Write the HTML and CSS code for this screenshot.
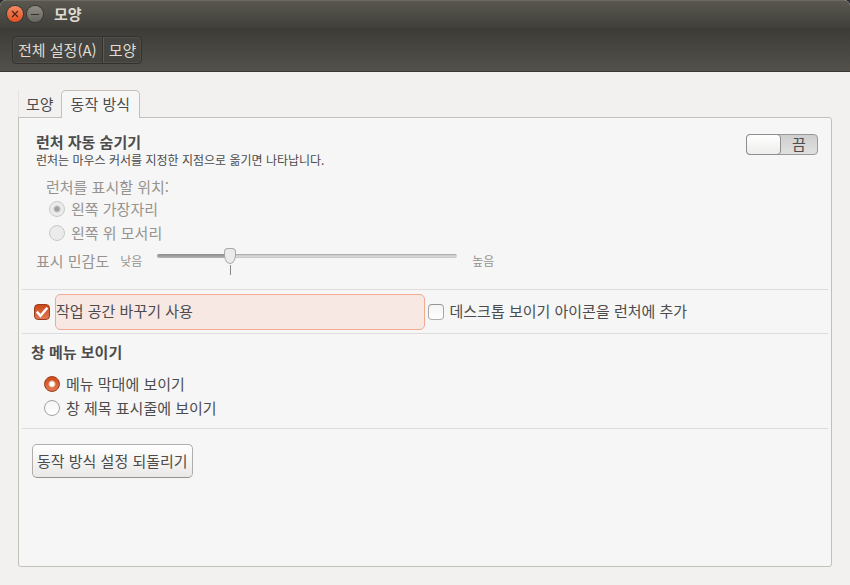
FILE: index.html
```html
<!DOCTYPE html>
<html lang="ko">
<head>
    <meta charset="UTF-8">
    <meta name="viewport" content="width=device-width, initial-scale=1.0">
    <title>모양</title>
    <link rel="stylesheet" href="styles.css">
</head>
<body>
    <div class="window">
        <!-- title bar -->
        <header class="titlebar">
            <button class="win-btn close" type="button" aria-label="닫기">
                <svg viewBox="0 0 16 16" width="16" height="16"><path d="M5 5l6 6M11 5l-6 6" stroke="#4a2416" stroke-width="1.2"/></svg>
            </button>
            <button class="win-btn minimize" type="button" aria-label="최소화">
                <svg viewBox="0 0 16 16" width="16" height="16"><path d="M4 8.5h8" stroke="#33322e" stroke-width="1"/></svg>
            </button>
            <h1>모양</h1>
        </header>

        <!-- breadcrumb toolbar -->
        <nav class="toolbar">
            <div class="crumbs">
                <button type="button">전체 설정(A)</button>
                <button type="button">모양</button>
            </div>
        </nav>

        <main class="content">
            <div class="tabs" role="tablist">
                <button class="tab" type="button" role="tab" aria-selected="false">모양</button>
                <button class="tab active" type="button" role="tab" aria-selected="true">동작 방식</button>
            </div>

            <div class="panel" role="tabpanel">
                <section class="launcher">
                    <div class="launcher-head">
                        <div>
                            <h2 id="autohide">런처 자동 숨기기</h2>
                            <p class="hint">런처는 마우스 커서를 지정한 지점으로 옮기면 나타납니다.</p>
                        </div>
                        <button class="switch" type="button" role="switch" aria-checked="false" aria-labelledby="autohide">
                            <span class="knob"></span>
                            <span class="state">끔</span>
                        </button>
                    </div>

                    <fieldset class="reveal" disabled>
                        <legend>런처를 표시할 위치:</legend>
                        <label class="option"><input type="radio" name="reveal" checked>왼쪽 가장자리</label>
                        <label class="option"><input type="radio" name="reveal">왼쪽 위 모서리</label>
                    </fieldset>

                    <div class="sensitivity">
                        <label for="sensitivity">표시 민감도</label>
                        <span class="small low">낮음</span>
                        <div class="scale">
                            <input type="range" id="sensitivity" min="0" max="100" value="23" disabled>
                            <span class="tick"></span>
                        </div>
                        <span class="small high">높음</span>
                    </div>
                </section>

                <section class="checks">
                    <div class="check-item">
                        <input type="checkbox" id="workspaces" checked>
                        <label class="focused" for="workspaces">작업 공간 바꾸기 사용</label>
                    </div>
                    <div class="check-item">
                        <input type="checkbox" id="desktop">
                        <label for="desktop">데스크톱 보이기 아이콘을 런처에 추가</label>
                    </div>
                </section>

                <section class="menus">
                    <h2>창 메뉴 보이기</h2>
                    <label class="option"><input type="radio" name="menus" checked>메뉴 막대에 보이기</label>
                    <label class="option"><input type="radio" name="menus">창 제목 표시줄에 보이기</label>
                </section>

                <div class="actions">
                    <button class="restore" type="button">동작 방식 설정 되돌리기</button>
                </div>
            </div>
        </main>
    </div>
</body>
</html>
```
FILE: styles.css
```css
* {
    box-sizing: border-box;
}
body {
    margin: 0;
    background-color: #2c2b33;
    color: #4c4c4c;
    font: 15px/20px "Noto Sans CJK KR", sans-serif;
}
button {
    margin: 0;
    padding: 0;
    border: none;
    background: none;
    color: inherit;
    font: inherit;
}
h1, h2, p {
    margin: 0;
}
h2 {
    font-size: 15px;
    line-height: 20px;
    font-weight: bold;
}
.window {
    display: flex;
    flex-direction: column;
    min-height: 100vh;
    border-radius: 6px 6px 0 0;
    background-color: #f2f1f0;
    overflow: hidden;
}

/* title bar */
.titlebar {
    display: flex;
    align-items: center;
    gap: 4px;
    height: 28px;
    padding: 0 7px 1px;
    background: linear-gradient(#59574f, #403f3a);
    border-top: 1px solid #6b695f;
    color: #dfdbd2;
}
.titlebar h1 {
    margin-left: 7px;
    font-size: 15px;
    line-height: 20px;
}
.win-btn {
    display: flex;
    width: 16px;
    height: 16px;
    border-radius: 50%;
    fill: none;
}
.win-btn.close {
    background: linear-gradient(#f58a63, #e2501f);
    box-shadow: 0 0 0 1px #3a3833;
}
.win-btn.minimize {
    background: linear-gradient(#8f8d84, #66645d);
    box-shadow: 0 0 0 1px #3a3833;
}

/* toolbar */
.toolbar {
    display: flex;
    align-items: center;
    height: 44px;
    padding-left: 12px;
    background: linear-gradient(#3c3b37, #53514a);
    border-bottom: 1px solid #393832;
    color: #dfdbd2;
}
.crumbs {
    display: flex;
    height: 28px;
    border: 1px solid #33322e;
    border-radius: 4px;
    background: linear-gradient(#454440, #45443e);
    box-shadow: inset 0 0 0 1px #504e48;
}
.crumbs button {
    padding: 0 6px 0 5px;
}
.crumbs button + button {
    padding: 0 5px;
    border-left: 1px solid #5b5952;
    box-shadow: -1px 0 #33322e;
}

/* tabs */
.content {
    display: flex;
    flex: 1;
    flex-direction: column;
    padding: 18px;
}
.tabs {
    display: flex;
    align-items: flex-end;
}
.tab {
    height: 27px;
    padding: 0 7px;
    border-left: 1px solid #e4e2df;
}
.tab.active {
    height: 28px;
    margin-bottom: -1px;
    padding: 0 9px 2px;
    border: 1px solid #c3c0bc;
    border-bottom: none;
    border-radius: 5px 5px 0 0;
    background-color: #f6f6f6;
    z-index: 1;
}
.panel {
    flex: 1;
    padding: 0 3px;
    border: 1px solid #c3c0bc;
    border-radius: 0 3px 3px 3px;
    background-color: #f6f6f6;
}
section {
    border-bottom: 1px solid #dcdcdc;
}

/* radios and check boxes */
input[type="radio"], input[type="checkbox"] {
    flex: none;
    appearance: none;
    width: 16px;
    height: 16px;
    margin: 0;
    border: 1px solid #a3a3a3;
    background: linear-gradient(#f4f4f4, #ffffff);
}
input[type="radio"] {
    border-radius: 50%;
}
input[type="radio"]:checked {
    border-color: #9c3d1b;
    background: radial-gradient(circle, #ffffff 2px, transparent 4px), linear-gradient(#cf4a19, #e27a50);
}
input[type="radio"]:disabled {
    border-color: #c8c8c8;
    background: #ebebeb;
}
input[type="radio"]:disabled:checked {
    background: radial-gradient(circle, #a0a0a0 2px, #ebebeb 4px);
}
input[type="checkbox"] {
    border-color: #949494 #a6a6a6 #b0b0b0;
    border-radius: 4px;
}
input[type="checkbox"]:checked {
    border-color: #9c3d1b;
    background: url("data:image/svg+xml,%3Csvg xmlns='http://www.w3.org/2000/svg' viewBox='0 0 14 14'%3E%3Cpath d='M1.8 6.6l3.6 4.2 7-8' fill='none' stroke='white' stroke-width='2.4'/%3E%3C/svg%3E") center / 14px 14px, linear-gradient(#cb4718, #e07a52);
}
.option {
    display: flex;
    align-items: center;
    gap: 6px;
    height: 24px;
}

/* launcher */
.launcher {
    padding: 14px 10px 12px 14px;
}
.launcher-head {
    display: flex;
    justify-content: space-between;
    align-items: flex-start;
}
.hint {
    font-size: 12px;
    line-height: 16px;
}
.switch {
    display: flex;
    width: 72px;
    height: 21px;
    margin-top: 2px;
    border: 1px solid #999999;
    border-radius: 4px;
    background: linear-gradient(#cfcfcf, #e0e0e0);
}
.knob {
    width: 35px;
    height: 21px;
    margin: -1px 0 0 -1px;
    border: 1px solid #8e8e8e;
    border-radius: 4px;
    background: linear-gradient(#ffffff, #ededeb);
}
.state {
    flex: 1;
    line-height: 18px;
    text-align: center;
}
.reveal {
    margin: 9px 0 0;
    padding: 0 0 0 13px;
    border: none;
    color: #96938e;
}
.reveal legend {
    margin-left: -3px;
    padding: 0;
}
.sensitivity {
    display: flex;
    align-items: center;
    height: 32px;
    color: #96938e;
}
.small {
    font-size: 12px;
    line-height: 16px;
}
.low {
    margin: 0 15px 0 11px;
}
.high {
    margin-left: 15px;
}
.scale {
    width: 300px;
    height: 26px;
}
.scale input {
    display: block;
    appearance: none;
    width: 100%;
    height: 16px;
    margin: 0;
    background: none;
}
.scale input::-webkit-slider-runnable-track {
    height: 4px;
    border-radius: 2px;
    background: linear-gradient(#8c8c8c, #b4b4b4) 0 0 / 24% 100% no-repeat, linear-gradient(#a0a0a0, #dddddd 50%, #c4c4c4);
}
.scale input::-webkit-slider-thumb {
    appearance: none;
    width: 12px;
    height: 16px;
    margin-top: -6px;
    border: 1px solid #a8a8a8;
    border-radius: 4px 4px 6px 6px / 4px 4px 9px 9px;
    background-color: #ebebeb;
}
.tick {
    display: block;
    width: 1px;
    height: 10px;
    margin: 1px 0 0 73px;
    background-color: #8a8884;
}

/* check box row */
.checks {
    display: flex;
    gap: 3px;
    padding: 4px 10px 3px 12px;
}
.check-item {
    display: flex;
    flex: 1;
    align-items: center;
    gap: 5px;
}
.check-item label {
    flex: 1;
    padding: 6px 0 8px;
    border: 1px solid transparent;
    border-radius: 5px;
}
.check-item label.focused {
    border-color: #f0ab92;
    background-color: #f7e8e4;
}

/* window menus */
.menus {
    padding: 8px 9px;
}
.menus h2 {
    margin-bottom: 10px;
}
.menus .option {
    margin-left: 13px;
}
.actions {
    padding: 15px 10px;
}
.restore {
    height: 34px;
    padding: 0 4px;
    border: 1px solid #b0adaa;
    border-bottom-color: #94918d;
    border-radius: 5px;
    background: linear-gradient(#ffffff, #ebe9e7);
}
```
